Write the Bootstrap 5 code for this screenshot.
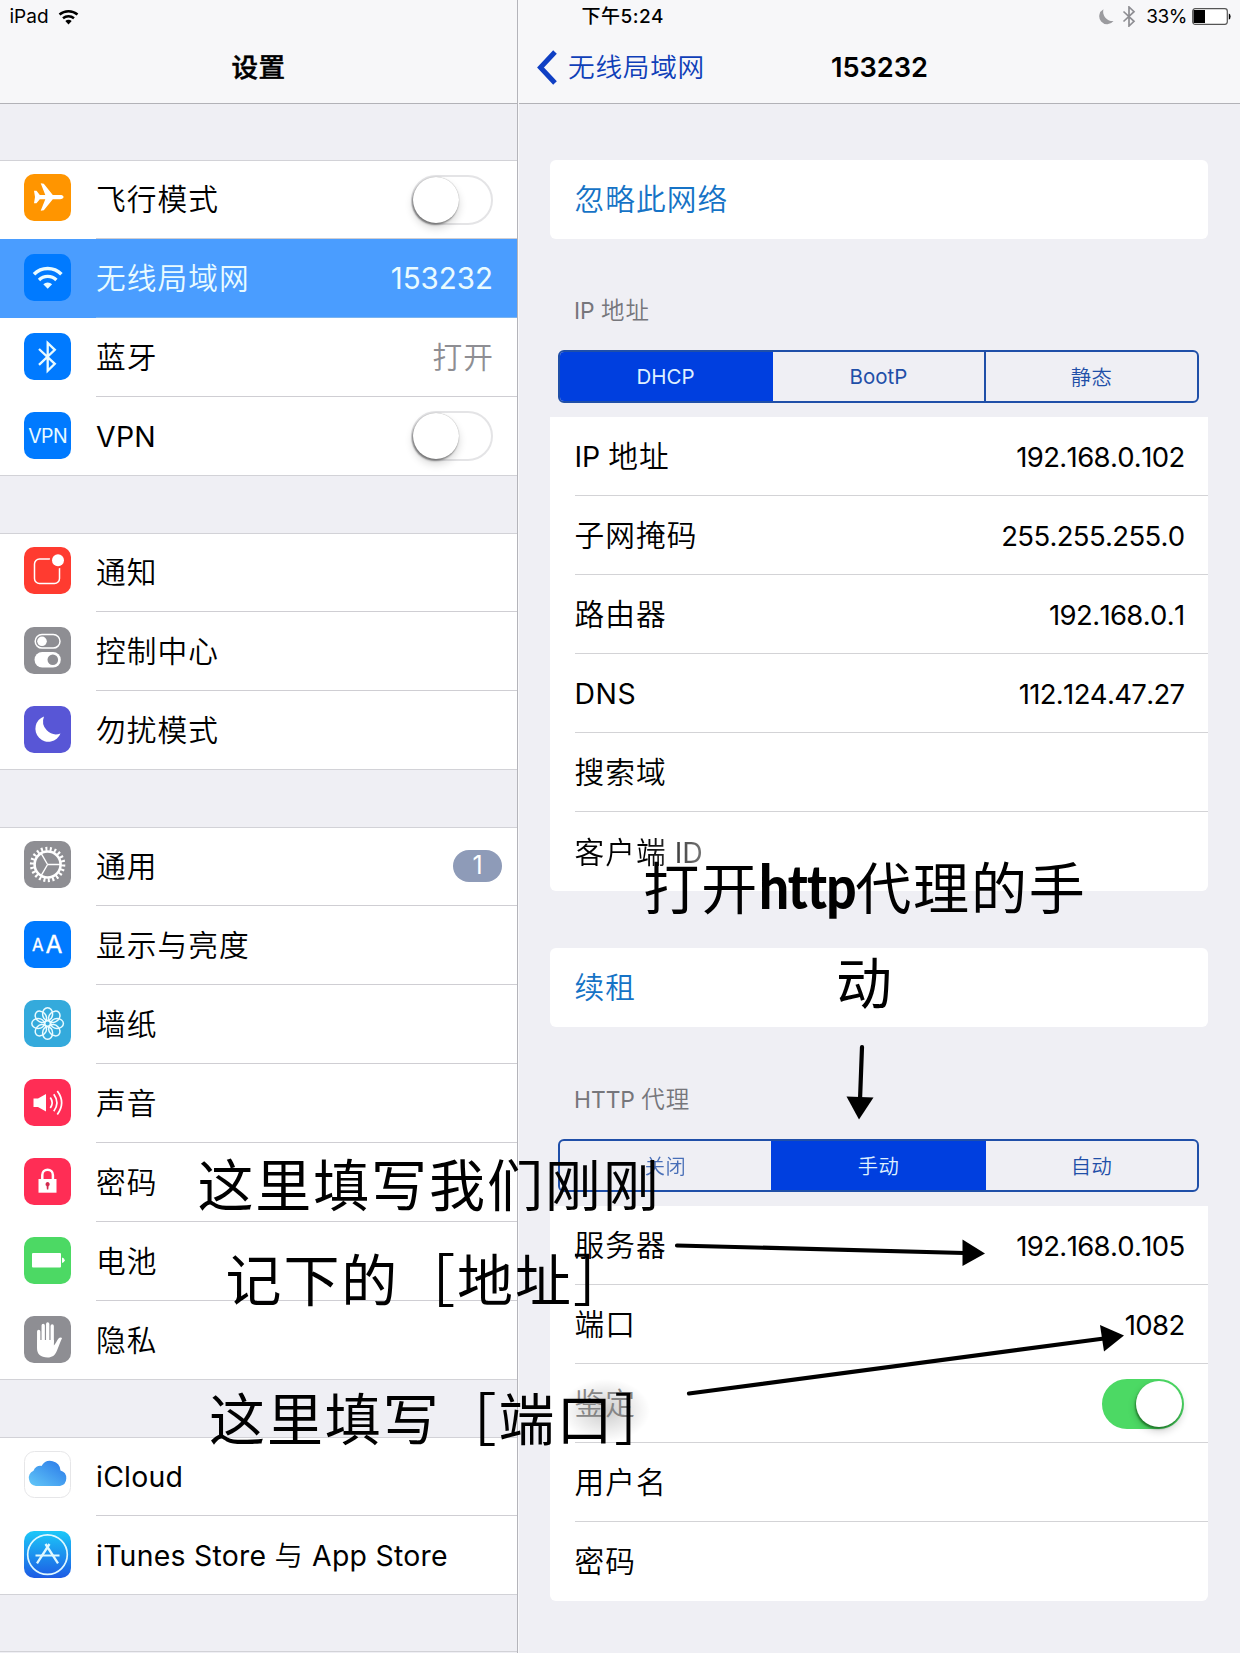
<!DOCTYPE html>
<html lang="zh-CN">
<head>
<meta charset="utf-8">
<meta name="viewport" content="width=device-width, initial-scale=1">
<title>设置</title>
<link href="https://cdn.jsdelivr.net/npm/bootstrap@5.3.0/dist/css/bootstrap.min.css" rel="stylesheet">
<style>
  body{width:1240px;height:1653px;overflow:hidden;background:#efeff4;color:#000;font-family:Inter,"Noto Sans CJK SC",sans-serif;font-size:28.4px;line-height:1;position:relative}
  .zh{font-size:29.7px;letter-spacing:1.05px;font-family:"Noto Sans CJK SC",sans-serif;font-weight:350}
  .item-body>.zh,.field>.zh,.titlebar .zh{margin-top:-3px}
  .item-body>.lat{margin-top:2px}
  .topbar{height:104px;background:#f7f7f9;border-bottom:1px solid #b2b2b7}
  .status{height:33px;font-size:19px}
  .titlebar{height:70px}
  .side{width:518px;height:1653px;border-right:1px solid #b4b4ba}
  .main{width:722px;height:1653px;border-left:1px solid #f8f8fa}
  .group{background:#fff;border-top:1px solid #d2d2d7;border-bottom:1px solid #d2d2d7;margin-bottom:57px}
  .item{height:79px;padding-left:24px}
  .group .item:first-child{height:78px}
  .group .item:last-child{height:78px}
  .item-body{height:100%;flex:1;margin-left:25px;padding-right:24px;border-bottom:1px solid #cfced3}
  .item:last-child .item-body{border-bottom:0}
  .item.active-row{background:#4a9dff;color:#e9fbff}
  .active-row .item-body{border-color:#7ab4f0}
  .tile{width:47px;height:47px;flex:none;display:block;margin-top:-3px}
  .group .item:first-child .tile{margin-top:-5px}
  .group .item:last-child .tile{margin-top:-2px}
  .switch{width:82px;height:50px;border-radius:25px;border:2px solid #e4e4e6;background:#fff;flex:none}
  .switch i{display:block;width:46px;height:46px;border-radius:50%;background:#fff;box-shadow:-1px 2px 2px rgba(0,0,0,.38),0 5px 9px rgba(0,0,0,.16),0 0 1px rgba(0,0,0,.4)}
  .switch.is-on{background:#4cd964;border-color:#4cd964;margin:2px 1px 0 0}
  .switch.is-on i{margin-left:32px;box-shadow:-1px 2px 2px rgba(0,60,0,.5),0 4px 8px rgba(0,0,0,.2)}
  .count{width:49px;height:32px;border-radius:16px;background:#8e9bb8;color:#fff;font-size:25px;margin-right:-9px;margin-top:-2px}
  .panel{width:658px;margin-left:31px;background:#fff;border-radius:6px}
  .panel.flat{border-radius:0 0 6px 6px}
  .field{height:79px;margin-left:24.5px;padding-right:23.5px;border-bottom:1px solid #d3d3d6}
  .field:last-child{border-bottom:0}
  .field .num{font-size:27.5px;letter-spacing:-.65px;font-kerning:none;font-feature-settings:"calt" 0;margin-top:3px}
  .act{color:#1673c6}
  .caption-row{padding-left:55px;color:#76767b;font-size:22.8px}
  .caption-row .zh{font-size:23.5px;letter-spacing:.8px}
  .seg{width:641px;height:53px;margin-left:39px;border:2px solid #1f4fa8;border-radius:6px;overflow:hidden;font-size:20.5px;color:#1f4fa8}
  .seg div{flex:1;border-left:2px solid #1f4fa8;padding-top:1px}
  .seg div:first-child{border-left:0}
  .seg .on{background:#003fdf;color:#dff0ff;border-color:#003fdf}
  .seg .on + div{border-color:#003fdf}
  .seg .zh{font-size:20.3px;letter-spacing:.5px;margin-top:-2px}
  .note{position:absolute;text-align:center;font:400 56px/95px "Noto Sans CJK SC",sans-serif;letter-spacing:1.9px;white-space:nowrap;color:#000}
  .note b{display:inline-block;font-family:Lato,sans-serif;font-weight:900;font-size:61px;line-height:60px;letter-spacing:-1px;transform:scaleX(.87);transform-origin:0 0;margin-right:-15px}
  .arrows{position:absolute;left:0;top:0;pointer-events:none}
  .field>.hazed{color:#858585;background:radial-gradient(closest-side,rgba(0,0,0,.2),rgba(0,0,0,0));padding:8px 14px 26px 14px;margin:-13px 0 -28px -14px}
  .fade-r{background:linear-gradient(90deg,#000 55%,#777);-webkit-background-clip:text;background-clip:text;color:transparent}
</style>
<script src="https://cdn.jsdelivr.net/npm/bootstrap@5.3.0/dist/js/bootstrap.bundle.min.js"></script>
</head>
<body>
<div class="d-flex">
  <aside class="side">
    <header class="topbar">
      <div class="status d-flex align-items-center" style="padding-left:9.500px"><span>iPad</span>
        <svg width="22" height="18" viewBox="0 0 22 18" style="margin-left:9px"><g fill="none" stroke="#000" stroke-width="2.500"><path d="M1.500 6.500A14 14 0 0 1 19.500 6.500"/><path d="M5 10.300A8.500 8.500 0 0 1 16 10.300"/></g><path d="M7.300 13A5 5 0 0 1 13.700 13L10.500 16.500Z"/></svg>
      </div>
      <div class="titlebar d-flex align-items-center justify-content-center"><span class="zh" style="font-size:26.500px;letter-spacing:.5px;font-weight:500;-webkit-text-stroke:.5px #000">设置</span></div>
    </header>
    <div style="height:56px"></div>
    <div class="group">
      <div class="item d-flex align-items-center">
        <svg class="tile" viewBox="0 0 47 47"><rect width="47" height="47" rx="10" fill="#ff9500"/><path fill="#fff" d="M39.500 23C39.500 21.600 38 21 36 21H28.800L19.800 9.800 16.700 9.200 21.300 21H15.800L12.500 16.800H10L11 23 10 29.200H12.500L15.800 25.200H21.300L16.700 36.800 19.800 36.200 28.800 25.200H36C38 25.200 39.500 24.400 39.500 23Z"/></svg>
        <div class="item-body d-flex align-items-center justify-content-between"><span class="zh">飞行模式</span><span class="switch"><i></i></span></div>
      </div>
      <div class="item active-row d-flex align-items-center">
        <svg class="tile" viewBox="0 0 47 47"><rect width="47" height="47" rx="10" fill="#007aff"/><g fill="none" stroke="#e9fbff"><path stroke-width="3.500" d="M10 20.200A19.300 19.300 0 0 1 37.400 20.200"/><path stroke-width="3.300" d="M15 26A12.300 12.300 0 0 1 32.400 26"/></g><path fill="#e9fbff" d="M19.300 30.300A6.600 6.600 0 0 1 28.100 30.300L23.700 34.700Z"/></svg>
        <div class="item-body d-flex align-items-center justify-content-between"><span class="zh">无线局域网</span><span class="lat" style="font-size:29.500px">153232</span></div>
      </div>
      <div class="item d-flex align-items-center">
        <svg class="tile" viewBox="0 0 47 47"><rect width="47" height="47" rx="10" fill="#007aff"/><path fill="none" stroke="#e9fbff" stroke-width="2.300" d="M15 16L30.800 30.800 23.700 37.800V10L30.800 16.800 15 31.800"/></svg>
        <div class="item-body d-flex align-items-center justify-content-between"><span class="zh">蓝牙</span><span class="zh" style="color:#8e8e93;margin-right:-1px">打开</span></div>
      </div>
      <div class="item d-flex align-items-center">
        <svg class="tile" viewBox="0 0 47 47"><rect width="47" height="47" rx="10" fill="#007aff"/><text x="23.900" y="30.500" text-anchor="middle" font-family="Inter,sans-serif" font-size="19.500" textLength="39.500" fill="#e9fbff">VPN</text></svg>
        <div class="item-body d-flex align-items-center justify-content-between"><span class="lat" style="letter-spacing:.3px">VPN</span><span class="switch"><i></i></span></div>
      </div>
    </div>
    <div class="group">
      <div class="item d-flex align-items-center">
        <svg class="tile" viewBox="0 0 47 47"><rect width="47" height="47" rx="10" fill="#ff3b30"/><rect x="10.500" y="12" width="25" height="24.500" rx="5" fill="none" stroke="#fff" stroke-width="1.500"/><circle cx="34" cy="13.200" r="8.300" fill="#ff3b30"/><circle cx="34" cy="13.200" r="6" fill="#fff"/></svg>
        <div class="item-body d-flex align-items-center"><span class="zh">通知</span></div>
      </div>
      <div class="item d-flex align-items-center">
        <svg class="tile" viewBox="0 0 47 47"><rect width="47" height="47" rx="10" fill="#8e8e93"/><rect x="11.200" y="7.500" width="24.800" height="13.600" rx="6.800" fill="none" stroke="#fff" stroke-width="1.500"/><circle cx="18" cy="14.300" r="4.800" fill="#fff"/><rect x="10.500" y="25" width="26.300" height="15.400" rx="7.700" fill="#fff"/><circle cx="28.800" cy="32.700" r="5.300" fill="#8e8e93"/></svg>
        <div class="item-body d-flex align-items-center"><span class="zh">控制中心</span></div>
      </div>
      <div class="item d-flex align-items-center">
        <svg class="tile" viewBox="0 0 47 47"><rect width="47" height="47" rx="10" fill="#5856d6"/><path fill="#fff" d="M20 10.500A13 13 0 1 0 36.500 27.500A13 13 0 0 1 20 10.500Z"/></svg>
        <div class="item-body d-flex align-items-center"><span class="zh">勿扰模式</span></div>
      </div>
    </div>
    <div class="group">
      <div class="item d-flex align-items-center">
        <svg class="tile" viewBox="0 0 47 47"><rect width="47" height="47" rx="10" fill="#8e8e93"/><g fill="none" stroke="#fff"><circle cx="23.600" cy="23.500" r="13" stroke-width="2.600"/><circle cx="23.600" cy="23.500" r="15.700" stroke-width="4" pathLength="44" stroke-dasharray=".9 1.1"/><path stroke-width="1.400" d="M23.600 23.500H36M23.600 23.500L17.400 12.800M23.600 23.500L17.400 34.200"/></g></svg>
        <div class="item-body d-flex align-items-center justify-content-between"><span class="zh">通用</span><span class="count d-flex align-items-center justify-content-center">1</span></div>
      </div>
      <div class="item d-flex align-items-center">
        <svg class="tile" viewBox="0 0 47 47"><rect width="47" height="47" rx="10" fill="#007aff"/><g fill="#fff" stroke="#fff" stroke-width=".3" font-family="Inter,sans-serif"><text x="8" y="30.200" font-size="16.800">A</text><text x="21.500" y="32" font-size="24.500">A</text></g></svg>
        <div class="item-body d-flex align-items-center"><span class="zh">显示与亮度</span></div>
      </div>
      <div class="item d-flex align-items-center">
        <svg class="tile" viewBox="0 0 47 47"><defs><ellipse id="petal" cx="23.600" cy="14" rx="5" ry="6.300"/></defs><rect width="47" height="47" rx="10" fill="#34aadc"/><g fill="none" stroke="#e9fbff" stroke-width="1.500"><use href="#petal"/><use href="#petal" transform="rotate(45 23.600 23.500)"/><use href="#petal" transform="rotate(90 23.600 23.500)"/><use href="#petal" transform="rotate(135 23.600 23.500)"/><use href="#petal" transform="rotate(180 23.600 23.500)"/><use href="#petal" transform="rotate(225 23.600 23.500)"/><use href="#petal" transform="rotate(270 23.600 23.500)"/><use href="#petal" transform="rotate(315 23.600 23.500)"/><circle cx="23.600" cy="23.500" r="2.800"/></g></svg>
        <div class="item-body d-flex align-items-center"><span class="zh">墙纸</span></div>
      </div>
      <div class="item d-flex align-items-center">
        <svg class="tile" viewBox="0 0 47 47"><rect width="47" height="47" rx="10" fill="#ff2d55"/><path fill="#fff" d="M9.500 19.600H14L22 15V32.500L14 28H9.500Z"/><g fill="none" stroke="#fff" stroke-width="1.700"><path d="M26.300 18.500Q30 23.700 26.300 29"/><path d="M29.800 15.200Q36 23.700 29.800 32.300"/><path d="M33.300 12Q42 23.700 33.300 35.500"/></g></svg>
        <div class="item-body d-flex align-items-center"><span class="zh">声音</span></div>
      </div>
      <div class="item d-flex align-items-center">
        <svg class="tile" viewBox="0 0 47 47"><rect width="47" height="47" rx="10" fill="#ff2d55"/><path fill="none" stroke="#fff" stroke-width="2.500" d="M18.300 22V17a5.300 5.300 0 0 1 10.600 0V22"/><rect x="14.500" y="21" width="18" height="13.700" fill="#fff"/><path fill="#d12a4e" d="M23.600 24a2.200 2.200 0 0 1 1 4.100L24.300 31.500H22.900L22.600 28.100A2.200 2.200 0 0 1 23.600 24Z"/></svg>
        <div class="item-body d-flex align-items-center"><span class="zh">密码</span></div>
      </div>
      <div class="item d-flex align-items-center">
        <svg class="tile" viewBox="0 0 47 47"><rect width="47" height="47" rx="10" fill="#4cd964"/><rect x="8" y="16" width="29" height="14.500" rx="1" fill="#fff"/><path fill="#fff" d="M38 20.500Q40.700 21 40.700 23.300T38 26Z"/></svg>
        <div class="item-body d-flex align-items-center"><span class="zh">电池</span></div>
      </div>
      <div class="item d-flex align-items-center">
        <svg class="tile" viewBox="0 0 47 47"><rect width="47" height="47" rx="10" fill="#8e8e93"/><g stroke="#fff" stroke-width="3.300" stroke-linecap="round" fill="none"><path d="M14.700 15.500V28M19.200 9.500V26M23.700 8V26M28.200 10V26"/></g><path fill="#fff" d="M13 24H29.900V29.500C31.500 28 33 24.500 34.300 22.700 35.500 21.200 37.800 21 38 22.300 36.500 25 35 30 33 34.500 31 39.500 28 41.500 23.700 41.500 16.500 41.500 13 38 13 32Z"/></svg>
        <div class="item-body d-flex align-items-center"><span class="zh">隐私</span></div>
      </div>
    </div>
    <div class="group" style="margin-bottom:56px">
      <div class="item d-flex align-items-center">
        <svg class="tile" viewBox="0 0 47 47"><defs><linearGradient id="cl" x1="0" y1="1" x2="1" y2="0"><stop offset="0" stop-color="#63c8f8"/><stop offset="1" stop-color="#2877e8"/></linearGradient></defs><rect x=".5" y=".5" width="46" height="46" rx="10" fill="#fff" stroke="#e6e6e8"/><path fill="url(#cl)" d="M12 35A8 8 0 0 1 9.500 19.800A7 7 0 0 1 17.500 15A10.200 10.200 0 0 1 36.500 19.500A8 8 0 0 1 36 35Z"/></svg>
        <div class="item-body d-flex align-items-center"><span class="lat" style="letter-spacing:.25px">iCloud</span></div>
      </div>
      <div class="item d-flex align-items-center">
        <svg class="tile" viewBox="0 0 47 47"><defs><linearGradient id="as" x1="0" y1="0" x2="0" y2="1"><stop offset="0" stop-color="#1cc8f8"/><stop offset="1" stop-color="#1d5be4"/></linearGradient></defs><rect width="47" height="47" rx="10" fill="url(#as)"/><g fill="none" stroke="#dff8ff"><circle cx="23.500" cy="23.600" r="19.800" stroke-width="1.700"/><path stroke-width="2.300" d="M25.500 13L13 32.300M21.500 13L34 32.300"/><path stroke-width="2" d="M11.500 24.500H35.500"/></g></svg>
        <div class="item-body d-flex align-items-center"><span class="text-nowrap" style="letter-spacing:.25px">iTunes Store <span class="zh" style="font-size:28.400px;letter-spacing:1px">与</span> App Store</span></div>
      </div>
    </div>
    <div style="height:2px;border-top:1px solid #d2d2d7"></div>
  </aside>
  <main class="main">
    <header class="topbar">
      <div class="status d-flex align-items-center justify-content-between" style="padding-left:62.500px;padding-right:9px">
        <span style="font-weight:500;letter-spacing:.5px">下午5:24</span>
        <span class="d-flex align-items-center">
          <svg width="16" height="16" viewBox="0 0 16 16" style="margin-right:8px"><path fill="#9b9b9f" d="M5.500 .3A7.900 7.900 0 1 0 15.500 12A9.300 9.300 0 0 1 5.500 .3Z"/></svg>
          <svg width="14" height="21" viewBox="0 0 14 21" style="margin-right:10px"><path fill="none" stroke="#8e8e93" stroke-width="1.700" d="M1.500 5.500L12 15.300 7 20V1L12 5.700 1.500 15.500"/></svg>
          <span style="letter-spacing:-.5px">33%</span>
          <svg width="39" height="17" viewBox="0 0 39 17" style="margin-left:5px"><rect x=".7" y=".7" width="34.600" height="15.600" rx="2.500" fill="#fff" stroke="#555" stroke-width="1.200"/><rect x="1.500" y="2" width="11.500" height="13"/><path d="M36.800 5.500Q38.600 6 38.600 8.500T36.800 11.500Z"/></svg>
        </span>
      </div>
      <div class="titlebar d-grid align-items-center" style="grid-template-columns:1fr auto 1fr">
        <span class="d-flex align-items-center" style="color:#0f3fb8;padding-left:18px"><svg width="20" height="35" viewBox="0 0 20 35" style="margin-top:-2px"><path fill="none" stroke="#0f3fc4" stroke-width="5" d="M18 2L3.500 17.500 18 33"/></svg><span class="zh" style="font-size:26.700px;letter-spacing:.7px;margin-left:11px">无线局域网</span></span>
        <span style="font-size:27.200px;font-weight:600;margin-top:-1px">153232</span><span></span>
      </div>
    </header>
    <div style="height:56px"></div>
    <section class="panel"><div class="field d-flex align-items-center act"><span class="zh">忽略此网络</span></div></section>
    <div class="caption-row d-flex align-items-center" style="height:111px;padding-top:32px"><span>IP <span class="zh">地址</span></span></div>
    <div class="seg d-flex">
      <div class="on d-flex align-items-center justify-content-center">DHCP</div><div class="d-flex align-items-center justify-content-center">BootP</div><div class="d-flex align-items-center justify-content-center"><span class="zh">静态</span></div>
    </div>
    <div style="height:14px"></div>
    <section class="panel flat">
      <div class="field d-flex align-items-center justify-content-between"><span>IP <span class="zh">地址</span></span><span class="num">192.168.0.102</span></div>
      <div class="field d-flex align-items-center justify-content-between"><span class="zh">子网掩码</span><span class="num">255.255.255.0</span></div>
      <div class="field d-flex align-items-center justify-content-between"><span class="zh">路由器</span><span class="num">192.168.0.1</span></div>
      <div class="field d-flex align-items-center justify-content-between"><span style="margin-top:2px;letter-spacing:.5px">DNS</span><span class="num">112.124.47.27</span></div>
      <div class="field d-flex align-items-center justify-content-between"><span class="zh">搜索域</span></div>
      <div class="field d-flex align-items-center justify-content-between"><span class="fade-r"><span class="zh">客户端</span> ID</span></div>
    </section>
    <div style="height:57px"></div>
    <section class="panel"><div class="field d-flex align-items-center act"><span class="zh">续租</span></div></section>
    <div class="caption-row d-flex align-items-center" style="height:112px;padding-top:32px"><span>HTTP <span class="zh">代理</span></span></div>
    <div class="seg d-flex">
      <div class="d-flex align-items-center justify-content-center"><span class="zh" style="opacity:.8">关闭</span></div><div class="on d-flex align-items-center justify-content-center"><span class="zh">手动</span></div><div class="d-flex align-items-center justify-content-center"><span class="zh">自动</span></div>
    </div>
    <div style="height:14px"></div>
    <section class="panel flat">
      <div class="field d-flex align-items-center justify-content-between"><span class="zh">服务器</span><span class="num">192.168.0.105</span></div>
      <div class="field d-flex align-items-center justify-content-between"><span class="zh">端口</span><span class="num">1082</span></div>
      <div class="field d-flex align-items-center justify-content-between"><span class="zh hazed">鉴定</span><span class="switch is-on"><i></i></span></div>
      <div class="field d-flex align-items-center justify-content-between"><span class="zh">用户名</span></div>
      <div class="field d-flex align-items-center justify-content-between"><span class="zh">密码</span></div>
    </section>
  </main>
</div>
<div class="note" style="left:642px;top:837px;width:446px">打开<b>http</b>代理的手<br>动</div>
<div class="note" style="left:196px;top:1134px;width:466px">这里填写我们刚刚</div>
<div class="note" style="left:225.500px;top:1229px">记下的［地址］</div>
<div class="note" style="left:209px;top:1368px">这里填写［端口］</div>
<svg class="arrows" width="1240" height="1653" viewBox="0 0 1240 1653">
  <g stroke="#000" stroke-width="4.200" stroke-linecap="round"><path d="M862 1047L860 1100"/><path d="M677 1245.500L964 1253"/><path d="M689 1393.500L1104 1338.500"/></g>
  <path d="M846.500 1096.500L873.500 1097.500 859 1119.500Z"/><path d="M962.500 1239.500V1266L985 1253.500Z"/><path d="M1100 1325L1104 1351.500 1124 1335.500Z"/>
</svg>
</body>
</html>
